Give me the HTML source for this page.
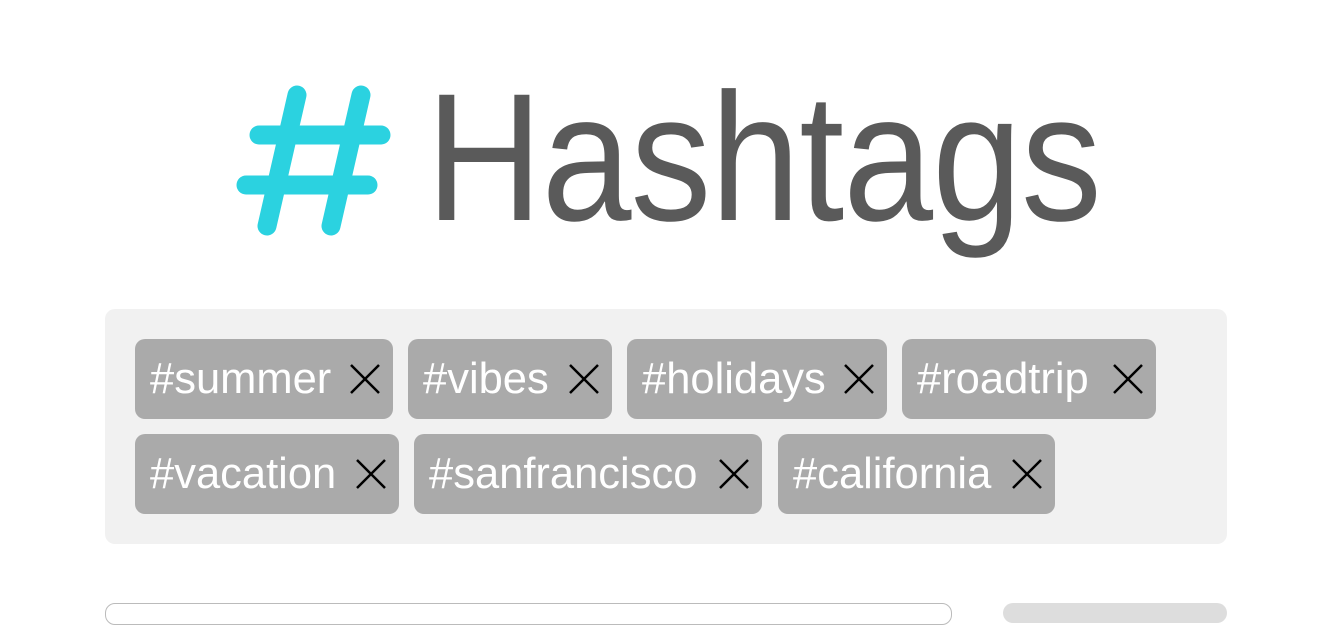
<!DOCTYPE html>
<html><head><style>
body{margin:0;width:1339px;height:607px;background:#fff;position:relative;overflow:hidden;font-family:"Liberation Sans",sans-serif}
.title{position:absolute;left:426px;top:47px;font-size:182px;line-height:220px;color:#5a5a5a;transform:scaleX(0.887);transform-origin:left top;font-weight:normal;letter-spacing:-1px}
.box{position:absolute;left:105px;top:309px;width:1122px;height:235px;background:#f1f1f1;border-radius:10px}
.tag{position:absolute;height:80px;background:#aaa;border-radius:10px;color:#fff;font-size:43.5px;line-height:80px;box-sizing:border-box;padding-left:15px;white-space:nowrap}
.tag svg{position:absolute;right:12px;top:24px}
.inp{position:absolute;left:105px;top:603px;width:845px;height:20px;border:1px solid #bbb;border-radius:10px}
.btn{position:absolute;left:1003px;top:603px;width:224px;height:20px;background:#ddd;border-radius:10px}
</style></head><body>
<svg style="position:absolute;left:0;top:0" width="420" height="260">
<g stroke="#2bd2e0" stroke-width="19" stroke-linecap="round" fill="none">
<line x1="297" y1="95" x2="267" y2="226"/>
<line x1="361" y1="95" x2="331" y2="226"/>
<line x1="259" y1="135" x2="381" y2="135"/>
<line x1="246" y1="185" x2="368" y2="185"/>
</g></svg>
<div class="title">Hashtags</div>
<div class="box"></div>
<div class="tag" style="left:135px;top:339px;width:258px">#summer<svg width="32" height="32"><path d="M2 2L30 30M30 2L2 30" stroke="#000" stroke-width="2.5"/></svg></div>
<div class="tag" style="left:408px;top:339px;width:204px">#vibes<svg width="32" height="32"><path d="M2 2L30 30M30 2L2 30" stroke="#000" stroke-width="2.5"/></svg></div>
<div class="tag" style="left:627px;top:339px;width:260px">#holidays<svg width="32" height="32"><path d="M2 2L30 30M30 2L2 30" stroke="#000" stroke-width="2.5"/></svg></div>
<div class="tag" style="left:902px;top:339px;width:254px">#roadtrip<svg width="32" height="32"><path d="M2 2L30 30M30 2L2 30" stroke="#000" stroke-width="2.5"/></svg></div>
<div class="tag" style="left:135px;top:434px;width:264px">#vacation<svg width="32" height="32"><path d="M2 2L30 30M30 2L2 30" stroke="#000" stroke-width="2.5"/></svg></div>
<div class="tag" style="left:414px;top:434px;width:348px">#sanfrancisco<svg width="32" height="32"><path d="M2 2L30 30M30 2L2 30" stroke="#000" stroke-width="2.5"/></svg></div>
<div class="tag" style="left:778px;top:434px;width:277px">#california<svg width="32" height="32"><path d="M2 2L30 30M30 2L2 30" stroke="#000" stroke-width="2.5"/></svg></div>
<div class="inp"></div>
<div class="btn"></div>
</body></html>
